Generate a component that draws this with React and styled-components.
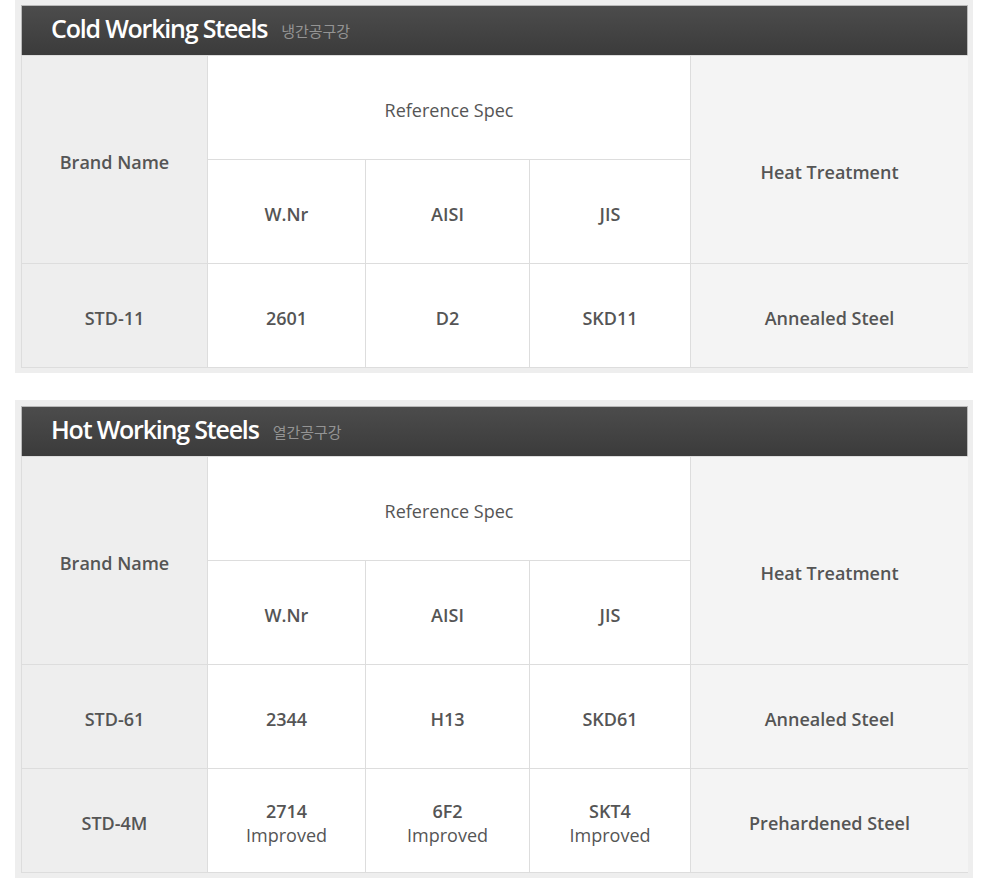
import React from "react";
import styled, { createGlobalStyle } from "styled-components";

const Global = createGlobalStyle`
  html, body { margin: 0; padding: 0; background: #fff; }
  body { font-family: "Open Sans", "Noto Sans CJK KR", sans-serif; }
`;

const Page = styled.div`
  padding: 0 12px 0 15px;
  margin-top: -1px;
  display: flex;
  flex-direction: column;
  gap: 27px;
  width: 958px;
`;

const Frame = styled.section`
  background: #eeeeee;
  padding: 6px 5px 5px 6px;
`;

const TitleBar = styled.header`
  height: 50px;
  box-sizing: border-box;
  border: 1px solid #b9b9b9;
  border-bottom: none;
  background: linear-gradient(#4c4c4c, #3b3b3b);
  display: flex;
  align-items: center;
  padding: 0 0 6px 29px;
  gap: 14px;
`;

const Title = styled.h2`
  margin: 0;
  font-family: "Open Sans", sans-serif;
  font-size: 25px;
  font-weight: 600;
  letter-spacing: -1.2px;
  color: #fff;
`;

const SubTitle = styled.span`
  font-family: "Noto Sans CJK KR", sans-serif;
  font-size: 15px;
  letter-spacing: 0;
  color: #949494;
  margin-top: 5px;
`;

const Grid = styled.div`
  display: grid;
  grid-template-columns: 185px 157px 163px 160px 277px;
  grid-auto-rows: 103px;
  gap: 1px;
  background: #dddddd;
  border: 1px solid #dddddd;
`;

const tones = { brand: "#eeeeee", heat: "#f4f4f4", plain: "#ffffff" };

const Cell = styled.div`
  background: ${(p) => tones[p.$tone || "plain"]};
  grid-row: ${(p) => (p.$rows ? `span ${p.$rows}` : "auto")};
  grid-column: ${(p) => (p.$cols ? `span ${p.$cols}` : "auto")};
  display: flex;
  flex-direction: column;
  align-items: center;
  justify-content: center;
  box-sizing: border-box;
  padding-top: ${(p) => (p.$lift ? "24px" : "5px")};
  text-align: center;
  font-family: "Open Sans", sans-serif;
  font-size: 18px;
  line-height: 24px;
  font-weight: ${(p) => (p.$light ? 400 : 600)};
  color: #555;
  letter-spacing: 0;
`;

const Line = styled.span`
  font-weight: ${(p) => (p.$light ? 400 : 600)};
`;

function SteelTable({ title, sub, rows }) {
  return (
    <Frame>
      <TitleBar>
        <Title>{title}</Title>
        <SubTitle>{sub}</SubTitle>
      </TitleBar>
      <Grid>
        <Cell $tone="brand" $rows={2}>Brand Name</Cell>
        <Cell $cols={3} $light>Reference Spec</Cell>
        <Cell $tone="heat" $rows={2} $lift>Heat Treatment</Cell>
        <Cell>W.Nr</Cell>
        <Cell>AISI</Cell>
        <Cell>JIS</Cell>
        {rows.map((r) => (
          <React.Fragment key={r.brand}>
            <Cell $tone="brand">{r.brand}</Cell>
            {[r.wnr, r.aisi, r.jis].map((v, i) => (
              <Cell key={i}>
                {Array.isArray(v) ? (
                  <>
                    <Line>{v[0]}</Line>
                    <Line $light>{v[1]}</Line>
                  </>
                ) : (
                  v
                )}
              </Cell>
            ))}
            <Cell $tone="heat">{r.heat}</Cell>
          </React.Fragment>
        ))}
      </Grid>
    </Frame>
  );
}

export default function App() {
  return (
    <>
      <Global />
      <Page>
        <SteelTable
          title="Cold Working Steels"
          sub="냉간공구강"
          rows={[{ brand: "STD-11", wnr: "2601", aisi: "D2", jis: "SKD11", heat: "Annealed Steel" }]}
        />
        <SteelTable
          title="Hot Working Steels"
          sub="열간공구강"
          rows={[
            { brand: "STD-61", wnr: "2344", aisi: "H13", jis: "SKD61", heat: "Annealed Steel" },
            {
              brand: "STD-4M",
              wnr: ["2714", "Improved"],
              aisi: ["6F2", "Improved"],
              jis: ["SKT4", "Improved"],
              heat: "Prehardened Steel",
            },
          ]}
        />
      </Page>
    </>
  );
}
